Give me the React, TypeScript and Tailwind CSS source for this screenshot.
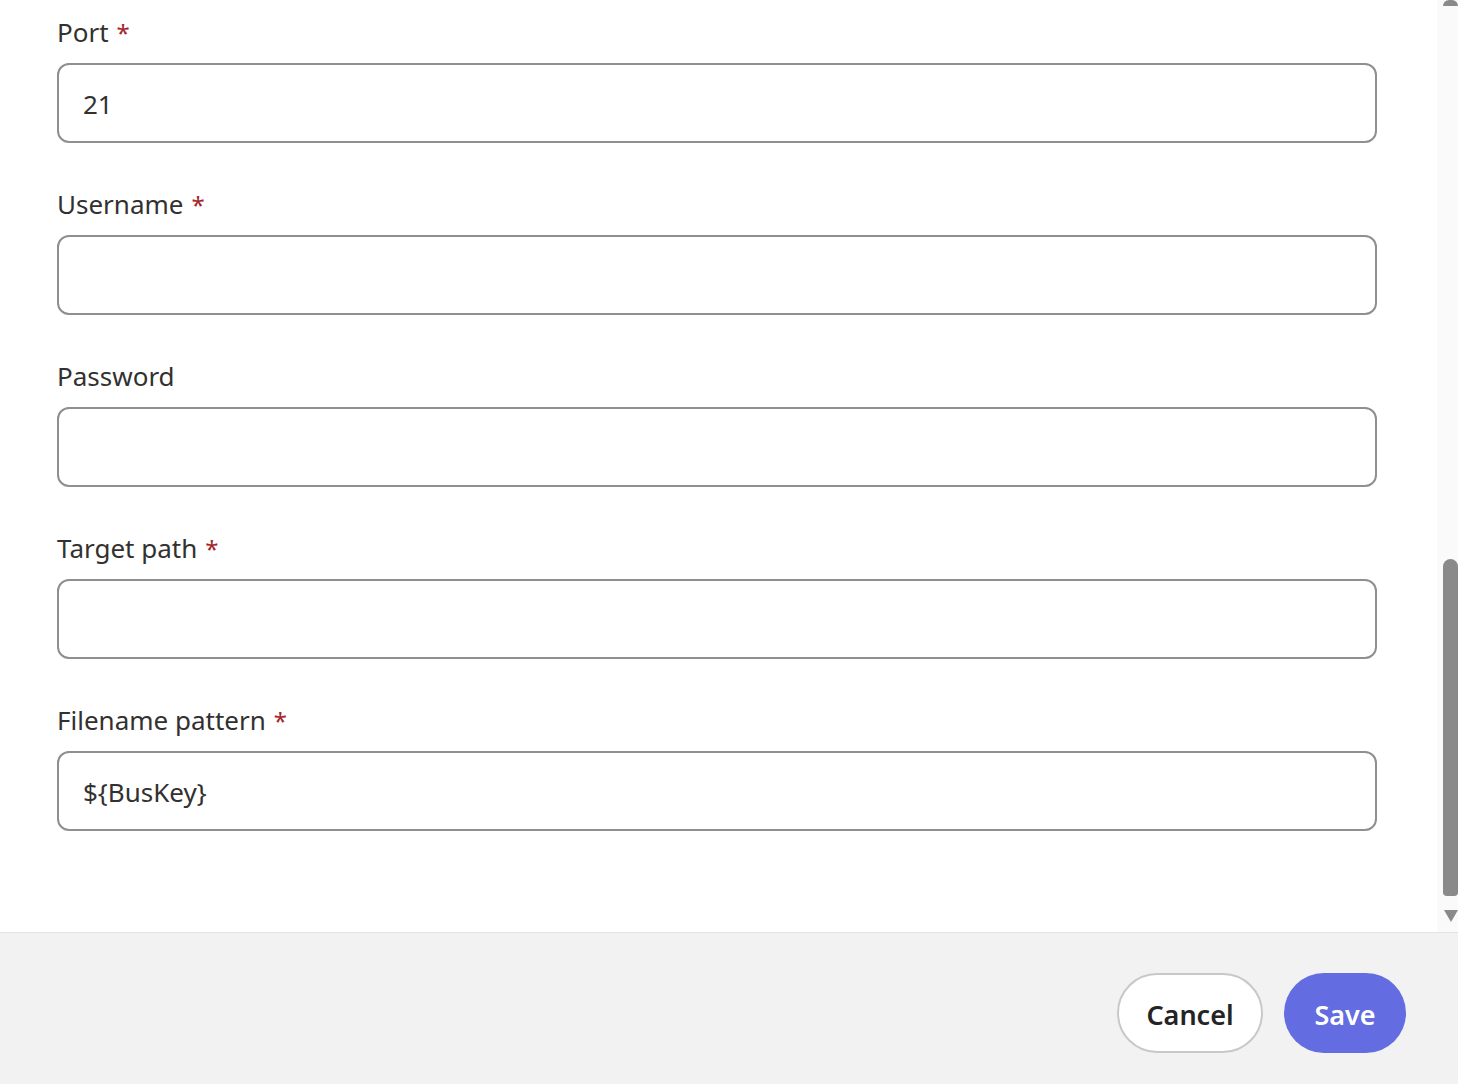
import React from "react"

type Field = {
  label: string
  required?: boolean
  value?: string
}

const fields: Field[] = [
  { label: "Port", required: true, value: "21" },
  { label: "Username", required: true },
  { label: "Password" },
  { label: "Target path", required: true },
  { label: "Filename pattern", required: true, value: "${BusKey}" },
]

function FormField({ field }: { field: Field }) {
  return (
    <div className="flex flex-col">
      <label className="h-[40px] leading-[40px] text-[26px] text-[#323130] mt-[12px] mb-[11px]">
        {field.label}
        {field.required && <span className="text-[#a4262c] text-[24px] ml-[8px]">*</span>}
      </label>
      <input
        defaultValue={field.value}
        className="h-[80px] w-full rounded-[12px] border-2 border-[#8f8f8f] bg-white px-[24px] pt-[2px] text-[26px] text-[#323130] outline-none"
      />
      <div className="h-[29px]" />
    </div>
  )
}

export default function App() {
  return (
    <div className="h-[1084px] w-[1458px] flex flex-col bg-white overflow-hidden" style={{ fontFamily: '"Noto Sans", "Open Sans", sans-serif' }}>
      <div className="flex flex-1 min-h-0">
        <div className="flex-1 pl-[57px] pr-[60px]">
          {fields.map((f) => (
            <FormField key={f.label} field={f} />
          ))}
        </div>
        {/* scrollbar */}
        <div className="w-[21px] bg-[#fafafa] flex flex-col items-end">
          <div className="h-[6px] w-[15px] rounded-t-[6px] bg-[#8a8a8a]" />
          <div className="flex-1" />
          <div className="h-[337px] w-[15px] rounded-t-[8px] rounded-b-[4px] bg-[#8a8a8a]" />
          <div className="h-[14px]" />
          <div className="h-0 w-0 border-l-[7px] border-r-[7px] border-t-[12px] border-l-transparent border-r-transparent border-t-[#8a8a8a]" />
          <div className="h-[10px]" />
        </div>
      </div>
      <div className="h-[152px] shrink-0 border-t border-[#e3e3e3] bg-[#f2f2f2] flex justify-end items-start pt-[40px] pr-[52px] gap-[21px]">
        <button className="h-[80px] w-[146px] rounded-full border-2 border-[#c8c8c8] bg-white pt-[4px] text-[27px] font-semibold text-[#242424]">
          Cancel
        </button>
        <button className="h-[80px] w-[122px] rounded-full bg-[#636ce0] pt-[4px] text-[27px] font-semibold text-white">
          Save
        </button>
      </div>
    </div>
  )
}
